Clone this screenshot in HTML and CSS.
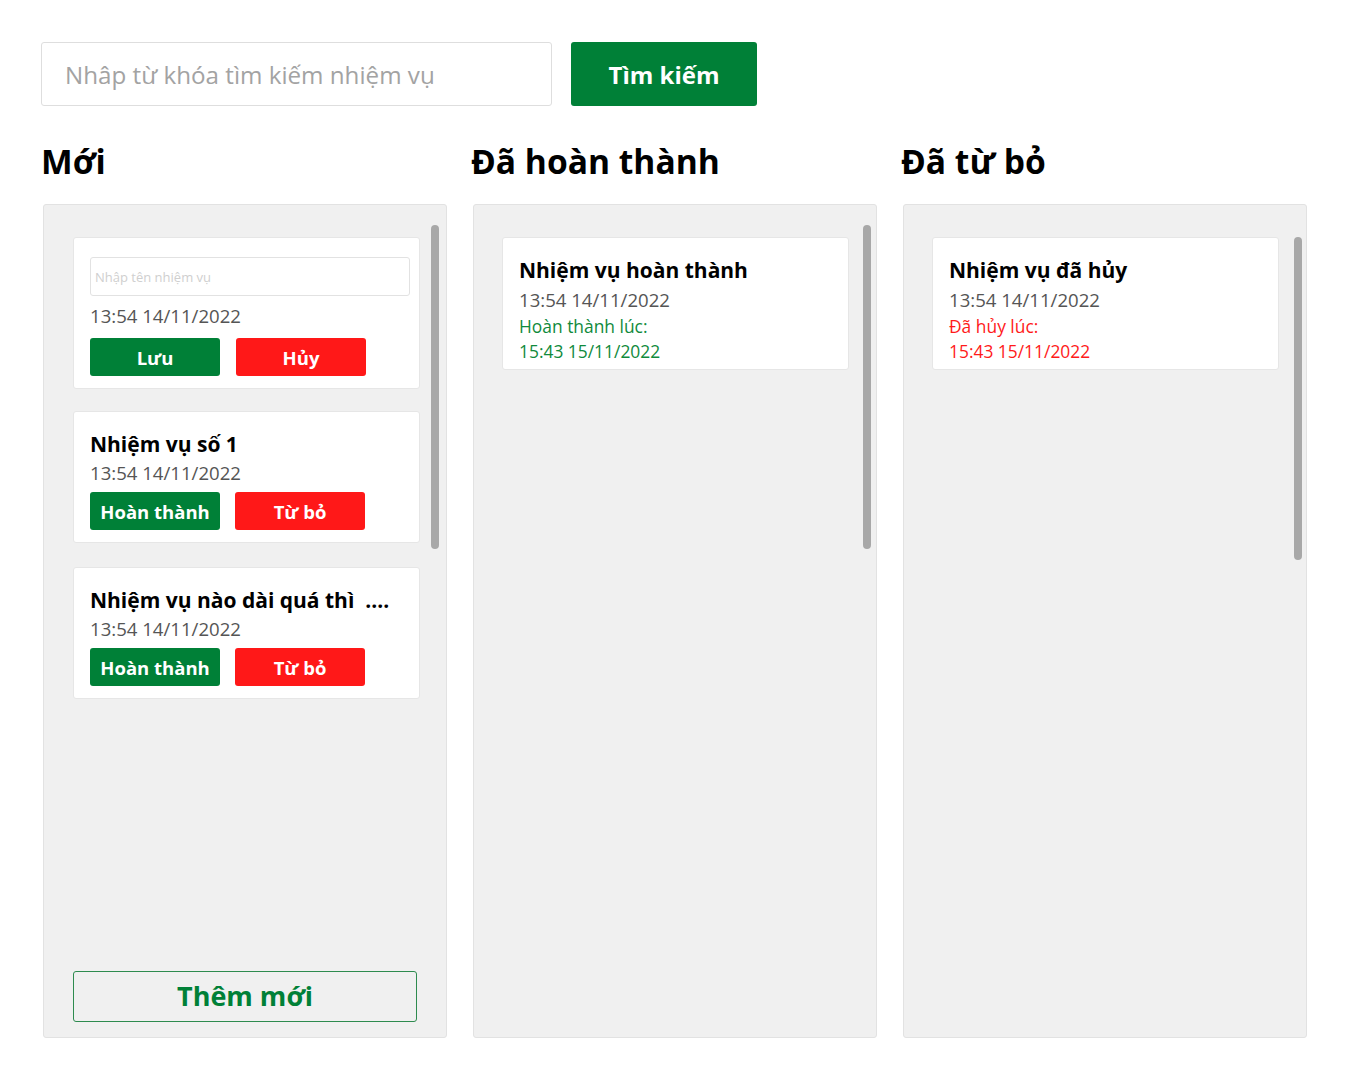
FILE: index.html
```html
<!DOCTYPE html>
<html lang="vi">
<head>
<meta charset="utf-8">
<title>Quản lý nhiệm vụ</title>
<link rel="stylesheet" href="styles.css">
</head>
<body>
<div class="page">
  <div class="search-row">
    <input class="search-input" type="text" placeholder="Nhâp từ khóa tìm kiếm nhiệm vụ">
    <button class="search-btn">Tìm kiếm</button>
  </div>
  <div class="board">
    <section class="column">
      <h2 class="col-title">Mới</h2>
      <div class="panel panel-new">
        <div class="thumb thumb-1"></div>
        <div class="card-list">
          <div class="card card-edit">
            <input class="name-input" type="text" placeholder="Nhập tên nhiệm vụ">
            <div class="date date-edit">13:54 14/11/2022</div>
            <div class="actions actions-edit">
              <button class="btn btn-green">Lưu</button>
              <button class="btn btn-red">Hủy</button>
            </div>
          </div>
          <div class="card">
            <div class="task-title">Nhiệm vụ số 1</div>
            <div class="date">13:54 14/11/2022</div>
            <div class="actions">
              <button class="btn btn-green">Hoàn thành</button>
              <button class="btn btn-red">Từ bỏ</button>
            </div>
          </div>
          <div class="card card-long">
            <div class="task-title">Nhiệm vụ nào dài quá thì&nbsp; ....</div>
            <div class="date">13:54 14/11/2022</div>
            <div class="actions">
              <button class="btn btn-green">Hoàn thành</button>
              <button class="btn btn-red">Từ bỏ</button>
            </div>
          </div>
        </div>
        <button class="add-btn">Thêm mới</button>
      </div>
    </section>
    <section class="column">
      <h2 class="col-title">Đã hoàn thành</h2>
      <div class="panel">
        <div class="thumb thumb-2"></div>
        <div class="card card-info">
          <div class="task-title">Nhiệm vụ hoàn thành</div>
          <div class="date date-info">13:54 14/11/2022</div>
          <div class="status status-done">Hoàn thành lúc:</div>
          <div class="status status-done">15:43 15/11/2022</div>
        </div>
      </div>
    </section>
    <section class="column">
      <h2 class="col-title">Đã từ bỏ</h2>
      <div class="panel">
        <div class="thumb thumb-3"></div>
        <div class="card card-info">
          <div class="task-title">Nhiệm vụ đã hủy</div>
          <div class="date date-info">13:54 14/11/2022</div>
          <div class="status status-cancel">Đã hủy lúc:</div>
          <div class="status status-cancel">15:43 15/11/2022</div>
        </div>
      </div>
    </section>
  </div>
</div>
</body>
</html>
```
FILE: styles.css
```css
* { box-sizing: border-box; }
html, body {
  margin: 0;
  padding: 0;
  background: #ffffff;
  font-family: "Open Sans", "Noto Sans", sans-serif;
  color: #000;
}
button, input { font-family: inherit; }

.page {
  padding: 42px 0 0 41px;
}

.search-row {
  display: flex;
  gap: 19px;
}
.search-input {
  width: 511px;
  height: 64px;
  border: 1px solid #dedede;
  border-radius: 3px;
  padding: 0 0 0 23px;
  font-size: 24.2px;
  color: #333;
  outline: none;
}
.search-input::placeholder { color: #a3a3a3; }
.search-btn {
  width: 186px;
  height: 64px;
  border: none;
  border-radius: 3px;
  background: #008037;
  color: #fff;
  font-size: 24px;
  font-weight: 700;
  padding: 0;
}

.board {
  display: grid;
  grid-template-columns: 404px 404px 404px;
  column-gap: 26px;
  margin-top: 32px;
  margin-left: 2px;
}
.col-title {
  margin: 0 0 20px -2px;
  font-size: 33.6px;
  line-height: 46px;
  font-weight: 700;
}

.panel {
  position: relative;
  height: 834px;
  background: #f0f0f0;
  border: 1px solid #e2e2e2;
  border-radius: 3px;
  padding: 32px 0 15px 28px;
}
.panel-new {
  display: flex;
  flex-direction: column;
  padding-left: 29px;
}
.thumb {
  position: absolute;
  width: 8px;
  background: #a8a8a8;
  border-radius: 4px;
}
.thumb-1 { top: 20px; right: 7px; height: 324px; }
.thumb-2 { top: 20px; right: 5px; height: 324px; }
.thumb-3 { top: 32px; right: 4px; height: 323px; }

.card-list {
  display: flex;
  flex-direction: column;
  gap: 22px;
}
.card {
  width: 347px;
  background: #fff;
  border: 1px solid #e6e6e6;
  border-radius: 3px;
  padding: 18px 16px 12px;
}
.card-long { margin-top: 2px; }
.card-edit { padding-top: 19px; }

.name-input {
  display: block;
  width: 320px;
  height: 39px;
  border: 1px solid #e2e2e2;
  border-radius: 3px;
  padding: 0 4px;
  font-size: 13px;
  outline: none;
}
.name-input::placeholder { color: #cfcfcf; }

.task-title {
  font-size: 21px;
  line-height: 29px;
  font-weight: 700;
  white-space: nowrap;
}
.date {
  font-size: 18.6px;
  line-height: 28px;
  color: #555;
}
.date-edit { margin-top: 6px; }
.date-info { margin-top: 1px; }

.actions {
  display: flex;
  gap: 15px;
  margin-top: 5px;
}
.actions-edit { margin-top: 8px; gap: 16px; }
.btn {
  width: 130px;
  height: 38px;
  border: none;
  border-radius: 3px;
  color: #fff;
  font-size: 18.5px;
  font-weight: 700;
  padding: 0;
}
.btn-green { background: #008037; }
.btn-red { background: #ff1818; }

.card-info {
  padding: 18px 16px 5px;
}
.status {
  font-size: 17.4px;
  line-height: 25px;
}
.status-done { color: #108a3c; }
.status-cancel { color: #ff1a1a; }

.add-btn {
  margin-top: auto;
  width: 344px;
  height: 51px;
  background: transparent;
  border: 1px solid #2e8b4f;
  border-radius: 3px;
  color: #008037;
  font-size: 27px;
  line-height: 1;
  font-weight: 700;
  padding: 0 0 3px;
}
```
